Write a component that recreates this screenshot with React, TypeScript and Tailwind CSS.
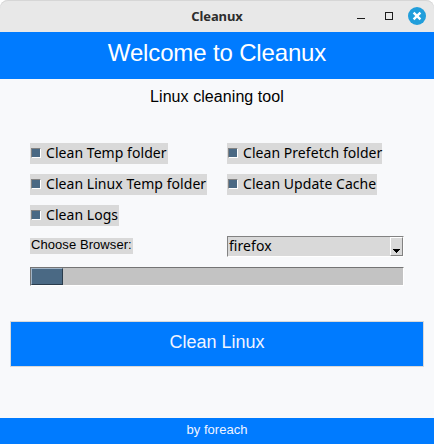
import React from "react";

const sans = "font-['Liberation_Sans',Arial,sans-serif]";
const ui = "font-['Noto_Sans','DejaVu_Sans',sans-serif] tracking-[0.05px]";

function CheckOption({ label, width }: { label: string; width: string }) {
  return (
    <label className={`flex h-[21px] items-start bg-[#d9d9d9] pl-px ${width}`}>
      <span className="mt-[5px] size-[10px] shrink-0 border border-t-[#828282] border-l-[#828282] border-r-white border-b-white bg-[#4a6984]" />
      <span className={`ml-[5px] whitespace-nowrap text-[14px] leading-[19px] text-black ${ui}`}>{label}</span>
    </label>
  );
}

function TitleBar() {
  return (
    <div className="grid h-8 grid-cols-[1fr_auto_1fr] items-center rounded-t-[8px] bg-[#e8e8e8] shadow-[inset_0_1px_0_#d6d6d6]">
      <span />
      <span className="pt-[2px] text-[13px] font-bold tracking-[-0.1px] text-[#2d2d2d] font-['Noto_Sans',sans-serif]">Cleanux</span>
      <svg className="justify-self-end" width="80" height="32" viewBox="0 0 80 32">
        <path d="M3 18.5h8" stroke="#1c1c1c" />
        <rect x="31.5" y="12.5" width="7" height="7" fill="none" stroke="#1c1c1c" />
        <circle cx="63" cy="16" r="9" fill="#219edb" />
        <path d="m59.6 12.6 6.8 6.8m0-6.8-6.8 6.8" stroke="white" strokeWidth="2.4" />
      </svg>
    </div>
  );
}

export default function App() {
  return (
    <div className="h-[444px] w-[434px] overflow-hidden bg-white">
      <div className={`flex h-full flex-col rounded-t-[8px] bg-[#f8f9fb] ${sans}`}>
        <TitleBar />
        <h1 className="h-[47px] bg-[#007bff] text-center text-[24px] leading-[42px] tracking-[-0.15px] text-white">Welcome to Cleanux</h1>
        <p className="h-[64px] pt-[6px] text-center text-[16px] leading-6 tracking-[0.07px] text-black">Linux cleaning tool</p>
        <div className="grid grid-cols-[197px_177px] gap-y-[10px] pl-[30px]">
          <CheckOption label="Clean Temp folder" width="w-[138px]" />
          <CheckOption label="Clean Prefetch folder" width="w-[155px]" />
          <CheckOption label="Clean Linux Temp folder" width="w-[177px]" />
          <CheckOption label="Clean Update Cache" width="w-[150px]" />
          <CheckOption label="Clean Logs" width="w-[89px]" />
          <span />
          <span className="mt-[2px] h-4 w-[103px] whitespace-nowrap bg-[#d9d9d9] pl-px text-[13px] leading-[14px] tracking-[0.07px] text-black">Choose Browser:</span>
          <div className="flex h-[21px] border border-t-[#828282] border-l-[#828282] border-r-white border-b-white bg-[#d9d9d9]">
            <span className={`flex-1 pl-px text-[14px] leading-[17px] text-black ${ui}`}>firefox</span>
            <span className="flex w-[13px] items-end justify-center border border-t-white border-l-white border-r-[#828282] border-b-[#828282] bg-[#d9d9d9] pb-[2px]">
              <svg width="7" height="4" viewBox="0 0 7 4" shapeRendering="crispEdges">
                <path d="M0 0h7v1h-1v1h-1v1h-1v1h-1v-1h-1v-1h-1v-1h-1z" />
              </svg>
            </span>
          </div>
        </div>
        <div className="mt-[10px] ml-[30px] h-[19px] w-[374px] border border-t-[#747474] border-l-[#747474] border-r-white border-b-white bg-[#c3c3c3]">
          <div className="h-[17px] w-8 border border-t-[#a0b4c7] border-l-[#a0b4c7] border-r-[#2a3c4c] border-b-[#2a3c4c] bg-[#4a6984]" />
        </div>
        <button className="mx-[10px] mt-[35px] h-[46px] border border-[#d9d9d9] bg-[#007bff] pb-1 text-[18px] leading-6 text-[#f0f4ff]">Clean Linux</button>
        <footer className="mt-auto h-[26px] bg-[#007bff] text-center text-[13px] leading-6 tracking-[0.05px] text-[#f0f4ff]">by foreach</footer>
      </div>
    </div>
  );
}
